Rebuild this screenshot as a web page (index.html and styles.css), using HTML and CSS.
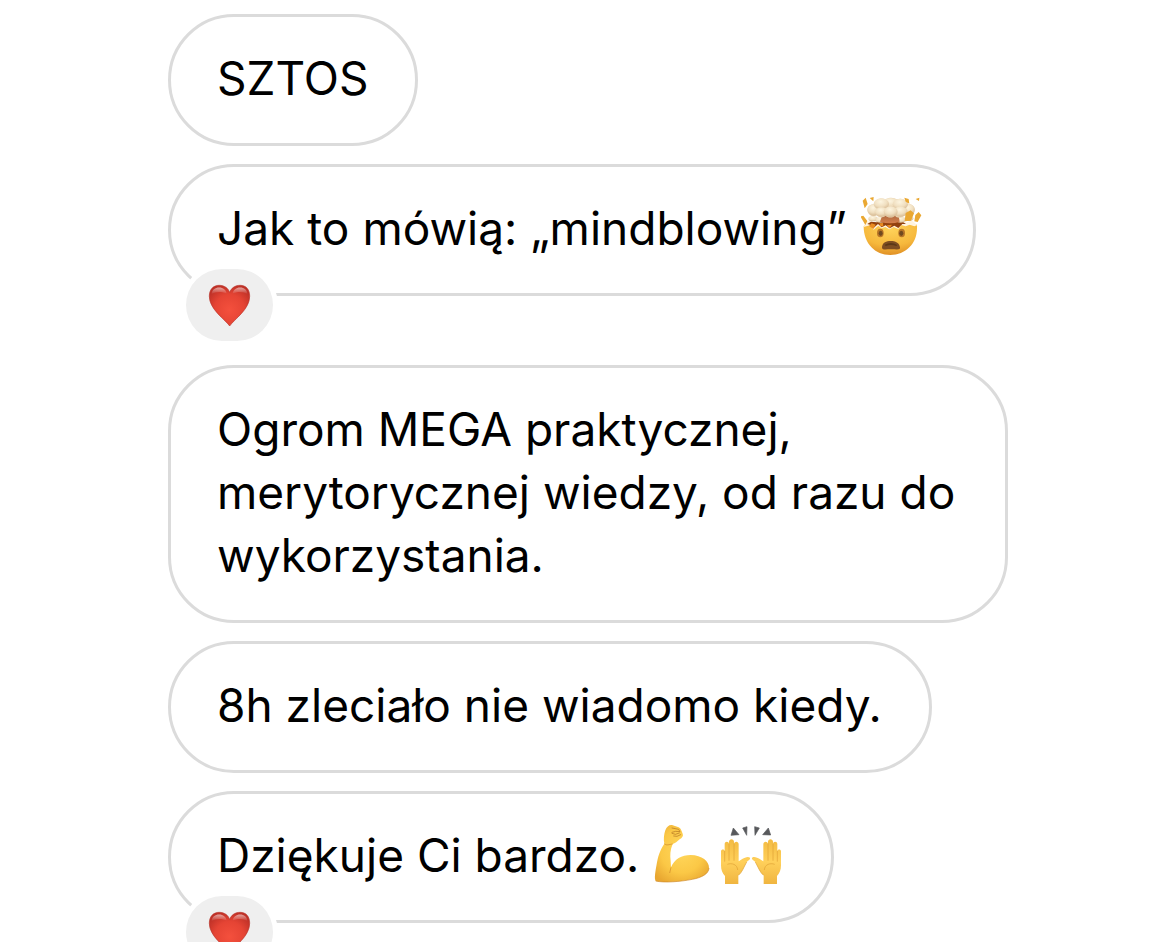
FILE: index.html
```html
<!DOCTYPE html>
<html lang="pl">
<head>
<meta charset="utf-8">
<meta name="viewport" content="width=device-width, initial-scale=1">
<title>Wiadomości</title>
<link rel="stylesheet" href="styles.css">
</head>
<body>
<svg class="defs" aria-hidden="true">
  <defs>
    <radialGradient id="skin" cx="50%" cy="45%" r="65%"><stop offset="0" stop-color="#ffd75c"/><stop offset=".6" stop-color="#fbc846"/><stop offset="1" stop-color="#e8a630"/></radialGradient>
    <radialGradient id="face" cx="50%" cy="15%" r="90%"><stop offset="0" stop-color="#ffd35a"/><stop offset=".6" stop-color="#f6b83c"/><stop offset="1" stop-color="#dd8a22"/></radialGradient>
    <radialGradient id="puff" cx="45%" cy="30%" r="75%"><stop offset="0" stop-color="#fdf5e0"/><stop offset=".55" stop-color="#f0dfc0"/><stop offset="1" stop-color="#d3b48c"/></radialGradient>
    <linearGradient id="stem" x1="0" y1="0" x2="0" y2="1"><stop offset="0" stop-color="#a9673f"/><stop offset="1" stop-color="#d6804c"/></linearGradient>
    <linearGradient id="palm" x1="0" y1="0" x2="0" y2="1"><stop offset="0" stop-color="#f3bb42"/><stop offset=".5" stop-color="#ffd05a"/><stop offset="1" stop-color="#f0b540"/></linearGradient>
    <radialGradient id="red" cx="50%" cy="60%" r="62%"><stop offset="0" stop-color="#f4503d"/><stop offset=".6" stop-color="#e54434"/><stop offset="1" stop-color="#bf3127"/></radialGradient>
    <linearGradient id="shine" x1="0" y1="0" x2="0" y2="1"><stop offset="0" stop-color="#fff" stop-opacity=".55"/><stop offset="1" stop-color="#fff" stop-opacity="0"/></linearGradient>
    <symbol id="heart" viewBox="129 99 129 131">
      <path d="M194 227C180 206 132 177 132 136C132 115 145 103 162 103C178 103 190 112 194 125C198 112 210 103 226 103C243 103 255 115 255 136C255 177 208 206 194 227Z" fill="url(#red)" stroke="#b8342a" stroke-width="2"/>
      <path d="M139 130C140 117 150 110 162 110C174 110 183 118 185 128C172 122 151 121 139 130ZM203 128C205 118 214 110 226 110C238 110 247 117 248 130C236 121 216 122 203 128Z" fill="url(#shine)"/>
    </symbol>
    <symbol id="hand" viewBox="27 72 92 140">
      <path d="M42 210V186C34 177 30 168 30 154V112C30 105 41 105 41 112V90C41 81 54 81 54 90V83C54 73 69 73 69 83V90C70 81 83 81 83 91V142C88 139 94 133 102 131C112 127 119 130 117 135C115 139 110 140 107 144C98 160 93 176 82 184V210Z" fill="url(#palm)"/>
      <path d="M41 111V143M54 89V140M69 88V140" fill="none" stroke="#dfa035" stroke-width="2"/>
      <path d="M49 151C62 146 79 151 80 168M107 144C98 160 93 176 82 184" fill="none" stroke="#dea034" stroke-width="2"/>
    </symbol>
  </defs>
</svg>
<main class="chat">
  <article class="bubble">SZTOS</article>
  <article class="bubble has-reaction">Jak to mówią: „mindblowing” <svg class="emoji" viewBox="30 30 192 192" role="img" aria-label="Eksplodująca głowa">
      <path d="M38 124Q39 119 46 118L197 118Q199 122 198 130C198 176 164 210 118 210C72 210 38 176 38 124Z" fill="url(#face)"/>
      <path d="M38 126L43 112L58 107L72 114L88 104L150 103L165 113L181 106L199 120L190 124L176 119L164 124L151 120L142 132L128 126L115 133L103 126L91 130L82 122L68 134L57 121Z" fill="#fff3df"/>
      <path d="M49 117L60 110L77 112L88 108L151 108L165 117L154 117L142 129L130 122L116 130L104 121L92 127L81 117L67 130L57 119Z" fill="#92410e"/>
      <path d="M54 123L62 115L74 119L67 132ZM85 115L96 114L97 124L88 124ZM107 121L123 119L116 130Z" fill="#e98b21"/>
      <g fill="url(#puff)">
        <ellipse cx="66" cy="101" rx="14" ry="8"/><ellipse cx="88" cy="105" rx="15" ry="8"/><ellipse cx="149" cy="104" rx="16" ry="9"/><ellipse cx="174" cy="100" rx="13" ry="8"/>
      </g>
      <path d="M95 88H142L146 110Q119 119 87 110Z" fill="url(#stem)"/>
      <path d="M52 84C44 68 55 57 68 58C72 42 91 37 103 43C116 35 131 38 137 43C151 38 167 45 169 57C186 55 197 69 189 84C184 96 168 96 162 91C153 101 136 99 132 92C123 101 109 98 104 92C95 99 81 98 77 91C68 97 56 93 52 84Z" fill="#ead5b2"/>
      <g fill="url(#puff)">
        <ellipse cx="68" cy="75" rx="19" ry="17"/><ellipse cx="173" cy="74" rx="18" ry="17"/><ellipse cx="119" cy="55" rx="26" ry="16"/><ellipse cx="91" cy="57" rx="23" ry="17"/><ellipse cx="148" cy="58" rx="23" ry="17"/><ellipse cx="91" cy="81" rx="20" ry="14"/><ellipse cx="148" cy="80" rx="22" ry="15"/><ellipse cx="119" cy="80" rx="21" ry="16"/>
      </g>
      <path d="M35 47L44 38L50 57L41 70ZM56 39L68 36L67 49ZM28 94L37 92L49 108L43 120ZM160 38L173 42L175 56L164 50ZM194 42L205 38L204 48ZM193 90L203 81L211 91L200 111L190 109ZM164 84L179 76L189 85L180 107L161 109Z" fill="#eaa832"/>
      <ellipse cx="88" cy="144" rx="10" ry="13" fill="#b87527"/><ellipse cx="152" cy="144" rx="10" ry="13" fill="#b87527"/>
      <ellipse cx="89" cy="145" rx="6" ry="8" fill="#70491f"/><ellipse cx="151" cy="145" rx="6" ry="8" fill="#70491f"/>
      <path d="M93 186C95 172 106 168 119 168C133 168 145 173 147 187C149 196 138 193 120 193C102 193 92 196 93 186Z" fill="#7d4d22"/>
      <path d="M101 179Q120 168 139 180L136 183Q120 177 104 183Z" fill="#5c3817"/>
    </svg><span class="reaction"><svg class="heart" role="img" aria-label="Serce"><use href="#heart"/></svg></span></article>
  <article class="bubble">Ogrom MEGA praktycznej, merytorycznej wiedzy, od razu do wykorzystania.</article>
  <article class="bubble">8h zleciało nie wiadomo kiedy.</article>
  <article class="bubble has-reaction">Dziękuje Ci bardzo. <svg class="emoji" viewBox="27 24 192 192" role="img" aria-label="Napięty biceps">
      <path d="M35 201C30 193 34 174 39 145C44 118 52 103 61 89C58 77 60 60 64 49C68 38 75 32 84 33L104 40C111 43 112 50 116 59C119 66 114 71 107 76C100 83 93 88 86 90C78 108 78 125 80 140L81 160C91 135 113 123 140 123C174 123 196 143 195 162C194 181 171 191 145 196C110 203 61 207 35 201Z" fill="url(#skin)"/>
      <path d="M35 201C61 207 110 203 145 196C171 191 194 181 195 162M81 160L77 177M86 90C75 91 68 96 61 89" fill="none" stroke="#cf8a2b" stroke-width="2"/>
      <path d="M84 42L104 46L108 53L95 52L84 55M84 58L94 61L106 57M89 66L99 67L110 62" fill="none" stroke="#b0711f" stroke-width="2" stroke-linecap="round" stroke-linejoin="round"/>
    </svg><svg class="emoji" viewBox="24 24 192 192" role="img" aria-label="Uniesione dłonie">
      <path d="M67 42L84 62L60 64ZM95 42L108 38L107 64ZM131 38L145 42L132 64ZM172 42L179 63L155 62Z" fill="#58595c" stroke="#58595c" stroke-width="2"/>
      <use href="#hand" x="27" y="72" width="92" height="140"/>
      <g transform="translate(240 0) scale(-1 1)"><use href="#hand" x="27" y="72" width="92" height="140"/></g>
    </svg><span class="reaction"><svg class="heart" role="img" aria-label="Serce"><use href="#heart"/></svg></span></article>
</main>
</body>
</html>
```
FILE: styles.css
```css
* {
  box-sizing: border-box;
}

body {
  margin: 0;
  background: #fff;
  color: #000;
  font-family: Inter, "Liberation Sans", sans-serif;
  font-size: 46px;
  line-height: 63px;
}

.defs {
  position: absolute;
  width: 0;
  height: 0;
}

.chat {
  display: flex;
  flex-direction: column;
  align-items: flex-start;
  gap: 18px;
  padding: 14px 162px 19px 168px;
  overflow: hidden;
}

.bubble {
  position: relative;
  max-width: 100%;
  padding: 30px 47px 33px 46px;
  border: 3px solid #dbdbdb;
  border-radius: 66px;
}

.has-reaction:not(:last-child) {
  margin-bottom: 51px;
}

.emoji {
  width: 64px;
  height: 64px;
  margin: -8px 1px;
  vertical-align: -6px;
}

.reaction {
  position: absolute;
  left: 15px;
  bottom: -48px;
  display: flex;
  align-items: center;
  justify-content: center;
  width: 87px;
  height: 72px;
  border-radius: 36px;
  background: #efefef;
  box-shadow: 0 0 0 5px #fff;
}

.heart {
  width: 43px;
  height: 43px;
}
```
